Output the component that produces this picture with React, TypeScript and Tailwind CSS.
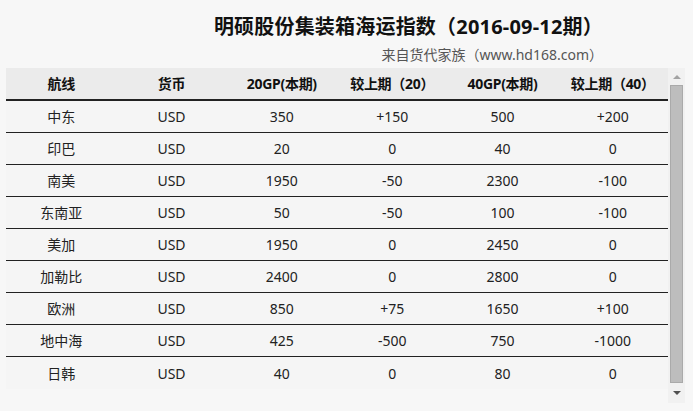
const rows = [
  ["中东", "USD", "350", "+150", "500", "+200"],
  ["印巴", "USD", "20", "0", "40", "0"],
  ["南美", "USD", "1950", "-50", "2300", "-100"],
  ["东南亚", "USD", "50", "-50", "100", "-100"],
  ["美加", "USD", "1950", "0", "2450", "0"],
  ["加勒比", "USD", "2400", "0", "2800", "0"],
  ["欧洲", "USD", "850", "+75", "1650", "+100"],
  ["地中海", "USD", "425", "-500", "750", "-1000"],
  ["日韩", "USD", "40", "0", "80", "0"],
];

const headers = ["航线", "货币", "20GP(本期)", "较上期（20）", "40GP(本期)", "较上期（40）"];

export default function App() {
  return (
    <div className="w-[693px] h-[411px] overflow-hidden bg-[#f7f7f7] font-['Noto_Sans','Noto_Sans_CJK_SC',sans-serif] text-[#222]">
      {/* title */}
      <div className="flex flex-col items-end pr-[90px] pt-[13px]">
        <h1 className="text-[20px] leading-[28px] font-bold text-[#111] tracking-[0.2px]">明硕股份集装箱海运指数（2016-09-12期）</h1>
        <p className="mt-[5px] text-[14px] leading-[18px] text-[#555]">来自货代家族（www.hd168.com）</p>
      </div>

      {/* table + scrollbar */}
      <div className="ml-[6px] mt-[4px] flex h-[335px] w-[679px]">
        <div className="w-[662px]">
          <div className="grid grid-cols-6 h-[33px] bg-[#ebebeb] border-b-2 border-[#222]">
            {headers.map((h) => (
              <div key={h} className="flex items-center justify-center text-[14px] font-bold text-[#111] tracking-[-0.3px]">
                {h}
              </div>
            ))}
          </div>
          {rows.map((r, i) => (
            <div
              key={r[0]}
              className={
                i < rows.length - 1
                  ? "grid grid-cols-6 h-[32px] bg-[#f5f5f5] border-b border-[#222]"
                  : "grid grid-cols-6 h-[32px] bg-[#f5f5f5]"
              }
            >
              {r.map((c, j) => (
                <div key={j} className="flex items-center justify-center text-[14px]">
                  {c}
                </div>
              ))}
            </div>
          ))}
        </div>

        <div className="w-[17px] h-full bg-[#f1f1f1] flex flex-col items-center">
          <div className="h-[17px] flex items-center justify-center">
            <div className="w-0 h-0 border-l-[4px] border-r-[4px] border-b-[4px] border-l-transparent border-r-transparent border-b-[#a3a3a3]" />
          </div>
          <div className="w-[13px] h-[298px] bg-[#bdbdbd] border border-[#aaa]" />
          <div className="flex-1 flex items-center justify-center">
            <div className="w-0 h-0 border-l-[4px] border-r-[4px] border-t-[4px] border-l-transparent border-r-transparent border-t-[#505050]" />
          </div>
        </div>
      </div>
    </div>
  );
}
